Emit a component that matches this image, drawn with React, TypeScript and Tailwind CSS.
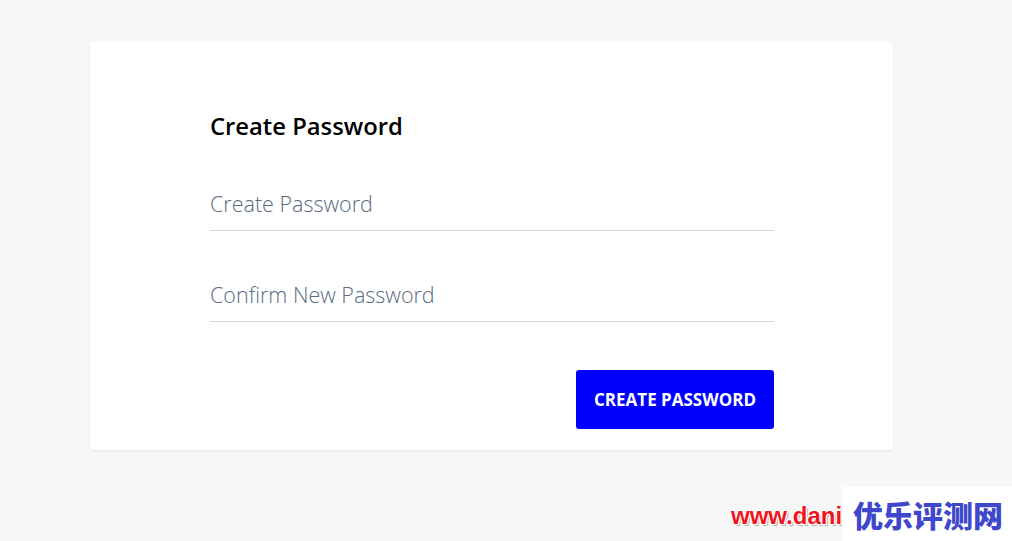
import React from "react";

const App = () => {
  return (
    <div
      className="relative min-h-[541px] w-full overflow-hidden bg-[#f7f7f7] pt-[42px] pl-[90px]"
      style={{ fontFamily: '"Open Sans", sans-serif' }}
    >
      {/* Card */}
      <div className="h-[408px] w-[803px] rounded-[4px] bg-white pt-[68px] pl-[120px] pb-[21px] shadow-[0_1px_2px_rgba(0,0,0,0.08)]">
        <div className="flex w-[564px] flex-col">
          <h2 className="mb-[38px] text-[23.8px] leading-[32px] font-semibold text-black">
            Create Password
          </h2>

          <input
            type="password"
            placeholder="Create Password"
            className="h-[51px] w-full border-b border-[#d5d5d5] bg-transparent pb-[3px] text-[21.5px] font-light text-[#56677c] outline-none placeholder:text-[#5a6b80]"
          />

          <input
            type="password"
            placeholder="Confirm New Password"
            className="mt-[40px] h-[51px] w-full border-b border-[#d5d5d5] bg-transparent pb-[3px] text-[21.5px] font-light text-[#56677c] outline-none placeholder:text-[#5a6b80]"
          />

          <div className="mt-[48px] flex justify-end">
            <button className="h-[59px] w-[198px] rounded-[3px] bg-[#0000ff] text-[17px] font-bold text-white uppercase">
              Create Password
            </button>
          </div>
        </div>
      </div>

      {/* Watermark overlay */}
      <div
        className="absolute top-[501px] left-[731px] text-[24px] leading-[30px] font-bold text-[#f0141e]"
        style={{
          fontFamily: '"Liberation Sans", Arial, sans-serif',
          textShadow:
            "1px 1px 0 #fff, -1px -1px 0 #fff, 1px -1px 0 #fff, -1px 1px 0 #fff, 2px 2px 1px rgba(0,0,0,0.3)",
        }}
      >
        www.dani
      </div>
      <div className="absolute top-[487px] left-[842px] flex h-[54px] w-[170px] items-center bg-white pl-[11px]">
        <span
          className="text-[30px] leading-none font-black text-[#3f48cc]"
          style={{ fontFamily: '"Noto Sans CJK SC", sans-serif' }}
        >
          优乐评测网
        </span>
      </div>
    </div>
  );
};

export default App;
